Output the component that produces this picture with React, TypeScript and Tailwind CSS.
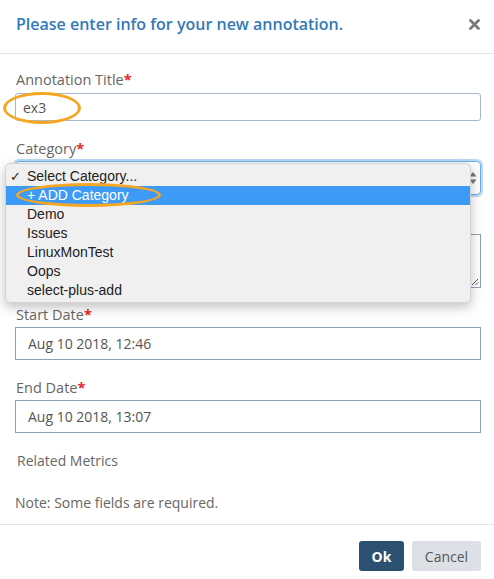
const options = ['+ ADD Category', 'Demo', 'Issues', 'LinuxMonTest', 'Oops', 'select-plus-add']

function Label({ text, required }: { text: string; required?: boolean }) {
  return (
    <div className="h-5 text-[14.5px] leading-5 text-[#666] pl-[1px]">
      {text}
      {required && <span className="text-[#e8262c] font-bold">*</span>}
    </div>
  )
}

export default function App() {
  return (
    <div className="relative w-[494px] h-[579px] bg-white overflow-hidden font-['Open_Sans',sans-serif]">
      {/* Header */}
      <div className="h-[54px] border-b border-[#e5e5e5] flex items-start justify-between pl-4 pr-[14px] pt-[13px]">
        <h2 className="text-[16px] leading-[22px] font-semibold text-[#337ab7]">
          Please enter info for your new annotation.
        </h2>
        <button type="button" className="mt-[6px] text-[#7a7a7a]" aria-label="Close">
          <svg width="11" height="11" viewBox="0 0 11 11">
            <path d="M1.5 1.5l8 8M9.5 1.5l-8 8" stroke="currentColor" strokeWidth="2.8" strokeLinecap="round" />
          </svg>
        </button>
      </div>

      {/* Body */}
      <div className="pl-[15px] pr-[13px] pt-4">
        <Label text="Annotation Title" required />
        <div className="mt-[3px] h-[28px] border border-[#a9b8c8] rounded-[3px] flex items-center px-[7px] text-[14px] text-[#555]">
          ex3
        </div>

        <div className="mt-[18px]">
          <Label text="Category" required />
        </div>
        <div className="mt-[2px] h-[34px] border border-[#66afe9] rounded-[4px] shadow-[0_0_0_2px_rgba(102,175,233,0.45)] flex items-center justify-end pr-[3px]">
          <svg width="8" height="14" viewBox="0 0 8 14" className="text-[#777]">
            <path d="M4 1L7.5 5.5H0.5Z M4 13L7.5 8.5H0.5Z" fill="currentColor" />
          </svg>
        </div>

        {/* description label sits under the open list */}
        <div className="mt-[16px] h-5" />
        <div className="relative mt-[3px] h-[54px] border border-[#8fa3b8]">
          <svg width="9" height="9" viewBox="0 0 9 9" className="absolute right-[1px] bottom-[1px] text-[#555]">
            <path d="M8 2L2 8M8 5.5L5.5 8" stroke="currentColor" strokeWidth="1" />
          </svg>
        </div>

        <div className="mt-[17px]">
          <Label text="Start Date" required />
        </div>
        <div className="mt-[2px] h-[33px] border border-[#8fa3b8] flex items-center px-[12px] text-[14px] text-[#555]">
          Aug 10 2018, 12:46
        </div>

        <div className="mt-[18px]">
          <Label text="End Date" required />
        </div>
        <div className="mt-[2px] h-[33px] border border-[#8fa3b8] flex items-center px-[12px] text-[14px] text-[#555]">
          Aug 10 2018, 13:07
        </div>

        <div className="mt-[18px] pl-[2px] text-[14px] leading-5 text-[#666]">Related Metrics</div>
        <div className="mt-[22px] text-[14px] leading-5 text-[#666]">Note: Some fields are required.</div>
      </div>

      {/* Footer */}
      <div className="mt-[11px] border-t border-[#e5e5e5] flex justify-end gap-2 pr-[13px] pt-[16px]">
        <button type="button" className="w-[45px] h-[30px] rounded-[3px] bg-[#2c5170] text-white text-[14px] font-bold">
          Ok
        </button>
        <button type="button" className="w-[69px] h-[30px] rounded-[3px] bg-[#dde1e6] text-[#555] text-[14px]">
          Cancel
        </button>
      </div>

      {/* Native select dropdown list */}
      <div className="absolute left-[5px] top-[163px] w-[466px] h-[140px] bg-[#f0f0f0] rounded-[5px] border border-[#d4d4d4] shadow-[0_4px_12px_rgba(0,0,0,0.25)] pt-[3px] font-['Liberation_Sans',Arial,sans-serif] text-[14px] text-[#222]">
        <div className="h-[19px] flex items-center">
          <span className="w-[21px] pl-[4px] text-[13px]">✓</span>
          <span>Select Category...</span>
        </div>
        {options.map((o, i) => (
          <div
            key={o}
            className={
              i === 0
                ? 'h-[19px] flex items-center pl-[21px] bg-[#3d9bf7] text-white'
                : 'h-[19px] flex items-center pl-[21px]'
            }
          >
            {o}
          </div>
        ))}
      </div>

      {/* Highlight rings */}
      <div className="absolute left-[3px] top-[92px] w-[78px] h-[32px] rounded-[50%] border-[3px] border-[#f5a623]" />
      <div className="absolute left-[16px] top-[183px] w-[145px] h-[24px] rounded-[50%] border-[3px] border-[#f5a623]" />
    </div>
  )
}
